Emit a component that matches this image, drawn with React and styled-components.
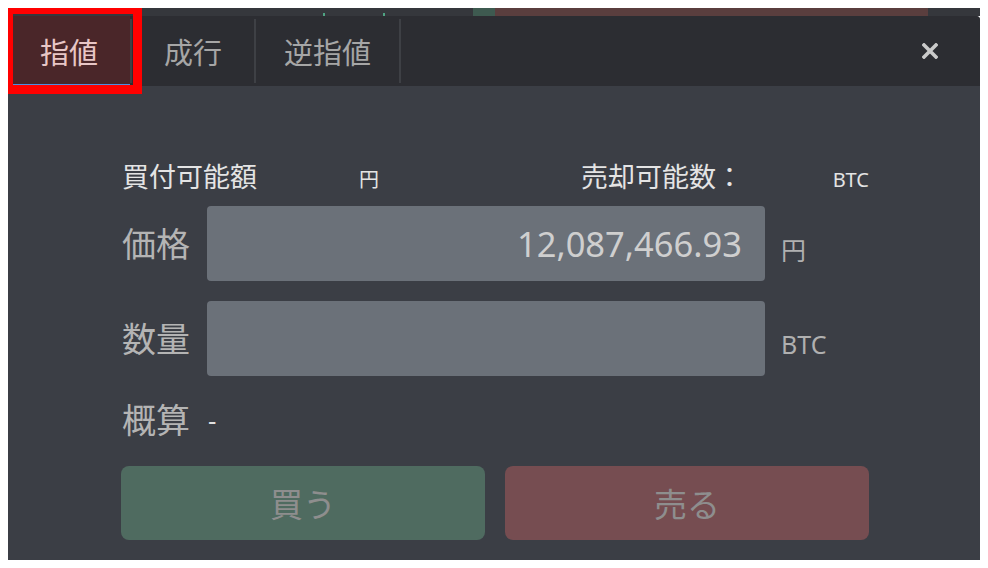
import React from "react";
import styled, { createGlobalStyle } from "styled-components";

const GlobalStyle = createGlobalStyle`
  body {
    margin: 8px;
    background: #fff;
    font-family: "Noto Sans", "Noto Sans CJK JP", sans-serif;
  }
`;

// Whole frame (what peeks through behind + the order panel)
const Frame = styled.div`
  position: relative;
  width: 972px;
`;

// Rows of the chart behind the panel
const BackStrip = styled.div`
  display: flex;
  height: 8px;
  background: #35373c;
`;

const StripSeg = styled.div`
  width: ${(p) => p.w}px;
  background: ${(p) => p.color};
  position: relative;
`;

const Dot = styled.span`
  position: absolute;
  left: ${(p) => p.x}px;
  bottom: 0;
  width: 2px;
  height: 3px;
  background: #4fa383;
`;

const Panel = styled.div`
  background: #3b3e45;
  border-top-right-radius: 4px;
  overflow: hidden;
`;

// Tabs header
const Header = styled.div`
  display: flex;
  align-items: stretch;
  height: 70px;
  background: #2c2d32;
`;

const Tab = styled.div`
  display: flex;
  align-items: center;
  justify-content: center;
  min-width: 122px;
  padding: 0 28px;
  box-sizing: border-box;
  font-size: 29px;
  color: ${(p) => (p.active ? "#e8c6c6" : "#a6a6a6")};
  background: ${(p) => (p.active ? "#4a2629" : "transparent")};
  box-shadow: ${(p) => (p.active ? "inset 0 -2px 0 #4d8ee0" : "none")};
  cursor: pointer;
`;

const TabSep = styled.div`
  width: 2px;
  margin: 3px 0;
  background: #3e4045;
`;

const HeaderSpace = styled.div`
  flex: 1;
`;

const Close = styled.div`
  display: flex;
  align-items: center;
  padding-right: 42px;
  cursor: pointer;
`;

// Form body
const Body = styled.div`
  width: 748px;
  margin: 0 111px 0 113px;
  padding: 76px 0 20px;
  display: flex;
  flex-direction: column;
`;

const InfoRow = styled.div`
  display: grid;
  grid-template-columns: 237px 222px 1fr auto;
  align-items: baseline;
  line-height: 30px;
  margin-bottom: 11px;
  padding-left: 1px;
`;

const InfoLabel = styled.span`
  font-size: 27px;
  color: #e4e4e4;
`;

const InfoUnit = styled.span`
  font-size: 20px;
  color: #e4e4e4;
`;

const FieldRow = styled.div`
  display: grid;
  grid-template-columns: 86px 558px auto;
  align-items: center;
  margin-bottom: ${(p) => p.gap || 0}px;
`;

const FieldLabel = styled.span`
  font-size: 34px;
  line-height: 40px;
  color: #b4b4b4;
  padding-left: 1px;
`;

const Input = styled.div`
  height: 75px;
  border-radius: 4px;
  background: #6b7179;
  display: flex;
  align-items: center;
  justify-content: flex-end;
  padding: 0 23px;
  box-sizing: border-box;
  font-size: 34.5px;
  color: #cfcfcf;
`;

const Unit = styled.span`
  font-size: 25px;
  color: #b0b0b0;
  padding: 10px 0 0 16px;
`;

const EstimateRow = styled.div`
  display: flex;
  align-items: center;
  gap: 18px;
  margin-top: 24px;
  height: 40px;
`;

const Dash = styled.span`
  font-size: 26px;
  color: #e0e0e0;
`;

const Buttons = styled.div`
  display: grid;
  grid-template-columns: 1fr 1fr;
  gap: 20px;
  margin-top: 26px;
`;

const OrderButton = styled.div`
  height: 74px;
  border-radius: 8px;
  background: ${(p) => (p.side === "buy" ? "#4f6b60" : "#764d51")};
  display: flex;
  align-items: center;
  justify-content: center;
  font-size: 33px;
  color: #8e8e8e;
`;

// Red annotation box over the active tab
const Highlight = styled.div`
  position: absolute;
  left: -4px;
  top: -3px;
  width: 138px;
  height: 89px;
  box-sizing: border-box;
  border: 9px solid #ff0000;
  pointer-events: none;
`;

const CloseIcon = () => (
  <svg width="16" height="16" viewBox="0 0 16 16">
    <path d="M2 2 L14 14 M14 2 L2 14" stroke="#cacaca" strokeWidth="3.6" strokeLinecap="square" />
  </svg>
);

const App = () => {
  return (
    <>
      <GlobalStyle />
      <Frame>
        <BackStrip>
          <StripSeg w={465} color="#35373c">
            <Dot x={315} />
            <Dot x={375} />
          </StripSeg>
          <StripSeg w={22} color="#3e5a50" />
          <StripSeg w={433} color="#5a3e3e" />
          <StripSeg w={52} color="#35373c" />
        </BackStrip>
        <Panel>
          <Header>
            <Tab active>指値</Tab>
            <TabSep />
            <Tab>成行</Tab>
            <TabSep />
            <Tab>逆指値</Tab>
            <TabSep />
            <HeaderSpace />
            <Close>
              <CloseIcon />
            </Close>
          </Header>
          <Body>
            <InfoRow>
              <InfoLabel>買付可能額</InfoLabel>
              <InfoUnit>円</InfoUnit>
              <InfoLabel>売却可能数：</InfoLabel>
              <InfoUnit>BTC</InfoUnit>
            </InfoRow>
            <FieldRow gap={20}>
              <FieldLabel>価格</FieldLabel>
              <Input>12,087,466.93</Input>
              <Unit>円</Unit>
            </FieldRow>
            <FieldRow>
              <FieldLabel>数量</FieldLabel>
              <Input />
              <Unit>BTC</Unit>
            </FieldRow>
            <EstimateRow>
              <FieldLabel>概算</FieldLabel>
              <Dash>-</Dash>
            </EstimateRow>
            <Buttons>
              <OrderButton side="buy">買う</OrderButton>
              <OrderButton side="sell">売る</OrderButton>
            </Buttons>
          </Body>
        </Panel>
        <Highlight />
      </Frame>
    </>
  );
};

export default App;
